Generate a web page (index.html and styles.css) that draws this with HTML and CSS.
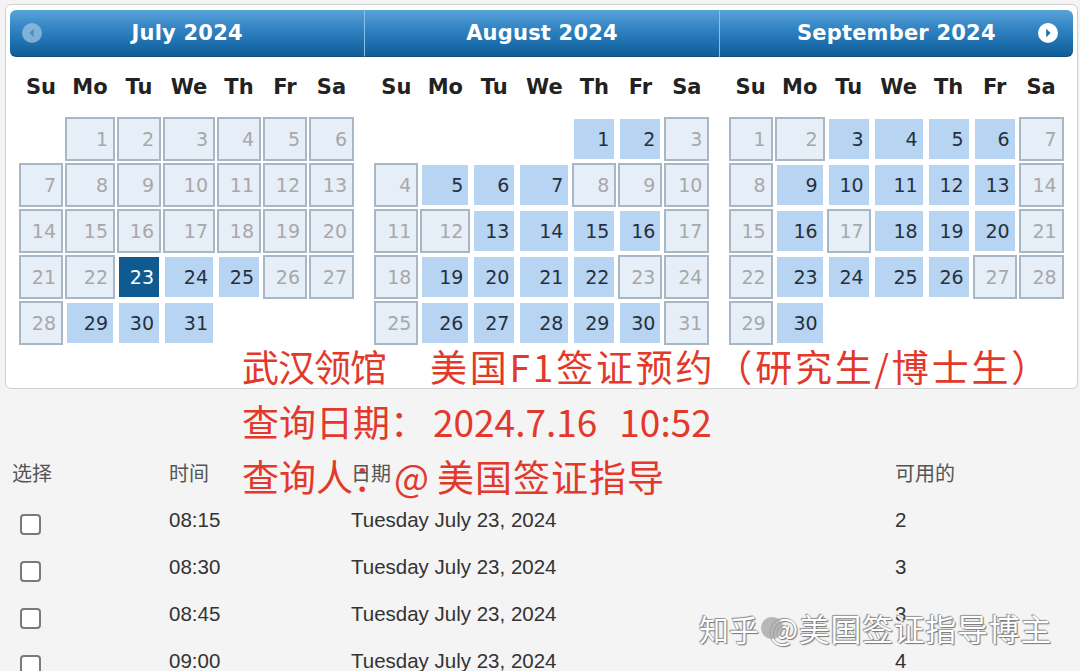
FILE: index.html
```html
<!DOCTYPE html>
<html lang="zh">
<head>
<meta charset="utf-8">
<title>Appointment calendar</title>
<link rel="stylesheet" href="styles.css">
</head>
<body>
<div class="widget">
  <div class="months">
    <div class="group first">
      <div class="head">
        <span class="nav prev"><svg viewBox="0 0 20 20" width="20" height="20"><circle cx="10" cy="10" r="10" fill="#9cc3e2" fill-opacity="0.75"/><path d="M11.8 5.8 L7.4 10 L11.8 14.2 Z" fill="#4f8fc4"/></svg></span>
        <span class="title">July 2024</span>
      </div>
      <table class="cal">
        <colgroup><col class="c1"><col class="c2"><col class="c3"><col class="c4"><col class="c5"><col class="c6"><col class="c7"></colgroup>
        <thead><tr><th>Su</th><th>Mo</th><th>Tu</th><th>We</th><th>Th</th><th>Fr</th><th>Sa</th></tr></thead>
        <tbody>
          <tr><td class="e"></td><td class="u"><span>1</span></td><td class="u"><span>2</span></td><td class="u"><span>3</span></td><td class="u"><span>4</span></td><td class="u"><span>5</span></td><td class="u"><span>6</span></td></tr>
          <tr><td class="u"><span>7</span></td><td class="u"><span>8</span></td><td class="u"><span>9</span></td><td class="u"><span>10</span></td><td class="u"><span>11</span></td><td class="u"><span>12</span></td><td class="u"><span>13</span></td></tr>
          <tr><td class="u"><span>14</span></td><td class="u"><span>15</span></td><td class="u"><span>16</span></td><td class="u"><span>17</span></td><td class="u"><span>18</span></td><td class="u"><span>19</span></td><td class="u"><span>20</span></td></tr>
          <tr><td class="u"><span>21</span></td><td class="u"><span>22</span></td><td class="s"><span>23</span></td><td class="a"><span>24</span></td><td class="a"><span>25</span></td><td class="u"><span>26</span></td><td class="u"><span>27</span></td></tr>
          <tr><td class="u"><span>28</span></td><td class="a"><span>29</span></td><td class="a"><span>30</span></td><td class="a"><span>31</span></td><td class="e"></td><td class="e"></td><td class="e"></td></tr>
        </tbody>
      </table>
    </div>
    <div class="group">
      <div class="head sep">
        <span class="title">August 2024</span>
      </div>
      <table class="cal">
        <colgroup><col class="c1"><col class="c2"><col class="c3"><col class="c4"><col class="c5"><col class="c6"><col class="c7"></colgroup>
        <thead><tr><th>Su</th><th>Mo</th><th>Tu</th><th>We</th><th>Th</th><th>Fr</th><th>Sa</th></tr></thead>
        <tbody>
          <tr><td class="e"></td><td class="e"></td><td class="e"></td><td class="e"></td><td class="a"><span>1</span></td><td class="a"><span>2</span></td><td class="u"><span>3</span></td></tr>
          <tr><td class="u"><span>4</span></td><td class="a"><span>5</span></td><td class="a"><span>6</span></td><td class="a"><span>7</span></td><td class="u"><span>8</span></td><td class="u"><span>9</span></td><td class="u"><span>10</span></td></tr>
          <tr><td class="u"><span>11</span></td><td class="u"><span>12</span></td><td class="a"><span>13</span></td><td class="a"><span>14</span></td><td class="a"><span>15</span></td><td class="a"><span>16</span></td><td class="u"><span>17</span></td></tr>
          <tr><td class="u"><span>18</span></td><td class="a"><span>19</span></td><td class="a"><span>20</span></td><td class="a"><span>21</span></td><td class="a"><span>22</span></td><td class="u"><span>23</span></td><td class="u"><span>24</span></td></tr>
          <tr><td class="u"><span>25</span></td><td class="a"><span>26</span></td><td class="a"><span>27</span></td><td class="a"><span>28</span></td><td class="a"><span>29</span></td><td class="a"><span>30</span></td><td class="u"><span>31</span></td></tr>
        </tbody>
      </table>
    </div>
    <div class="group last">
      <div class="head sep">
        <span class="title">September 2024</span>
        <span class="nav next"><svg viewBox="0 0 20 20" width="20" height="20"><circle cx="10" cy="10" r="10" fill="#ffffff"/><path d="M8.2 5.8 L12.6 10 L8.2 14.2 Z" fill="#1f6ea8"/></svg></span>
      </div>
      <table class="cal">
        <colgroup><col class="c1"><col class="c2"><col class="c3"><col class="c4"><col class="c5"><col class="c6"><col class="c7"></colgroup>
        <thead><tr><th>Su</th><th>Mo</th><th>Tu</th><th>We</th><th>Th</th><th>Fr</th><th>Sa</th></tr></thead>
        <tbody>
          <tr><td class="u"><span>1</span></td><td class="u"><span>2</span></td><td class="a"><span>3</span></td><td class="a"><span>4</span></td><td class="a"><span>5</span></td><td class="a"><span>6</span></td><td class="u"><span>7</span></td></tr>
          <tr><td class="u"><span>8</span></td><td class="a"><span>9</span></td><td class="a"><span>10</span></td><td class="a"><span>11</span></td><td class="a"><span>12</span></td><td class="a"><span>13</span></td><td class="u"><span>14</span></td></tr>
          <tr><td class="u"><span>15</span></td><td class="a"><span>16</span></td><td class="u"><span>17</span></td><td class="a"><span>18</span></td><td class="a"><span>19</span></td><td class="a"><span>20</span></td><td class="u"><span>21</span></td></tr>
          <tr><td class="u"><span>22</span></td><td class="a"><span>23</span></td><td class="a"><span>24</span></td><td class="a"><span>25</span></td><td class="a"><span>26</span></td><td class="u"><span>27</span></td><td class="u"><span>28</span></td></tr>
          <tr><td class="u"><span>29</span></td><td class="a"><span>30</span></td><td class="e"></td><td class="e"></td><td class="e"></td><td class="e"></td><td class="e"></td></tr>
        </tbody>
      </table>
    </div>
  </div>
</div>

<div class="slots">
  <div class="row hdr"><span class="col1">选择</span><span>时间</span><span class="date-h">日期</span><span>可用的</span></div>
  <div class="row"><span class="col1"><i class="box"></i></span><span>08:15</span><span>Tuesday July 23, 2024</span><span>2</span></div>
  <div class="row"><span class="col1"><i class="box"></i></span><span>08:30</span><span>Tuesday July 23, 2024</span><span>3</span></div>
  <div class="row"><span class="col1"><i class="box"></i></span><span>08:45</span><span>Tuesday July 23, 2024</span><span>3</span></div>
  <div class="row"><span class="col1"><i class="box"></i></span><span>09:00</span><span>Tuesday July 23, 2024</span><span>4</span></div>
</div>

<div class="note">
  <div class="line"><span class="g0">武汉领馆</span><span class="g1">美国F1签证预约（研究生/博士生）</span></div>
  <div class="line"><span>查询日期：</span><span class="g2">2024.7.16</span><span class="g3">10:52</span></div>
  <div class="line"><span>查询人：</span><span class="g4">@</span><span class="g5">美国签证指导</span></div>
</div>

<div class="hdr-over">日期</div>

<div class="mark"><span>知乎</span><i class="blob"></i><span class="who">@美国签证指导博主</span></div>
</body>
</html>
```

FILE: styles.css
```css
html, body {
  margin: 0;
  padding: 0;
}
body {
  background: #f4f4f4;
  width: 1080px;
  height: 671px;
  overflow: hidden;
  position: relative;
  font-family: "DejaVu Sans", Verdana, sans-serif;
}

.widget {
  margin: 4px 0 0 5px;
  width: 1063px;
  padding: 5px 4px 42px 4px;
  background: #ffffff;
  border: 1px solid #cfcfcf;
  border-radius: 6px;
}

.months {
  display: flex;
}
.group {
  flex: 1 1 0;
  min-width: 0;
}

.head {
  height: 47px;
  display: flex;
  align-items: center;
  justify-content: center;
  position: relative;
  background: linear-gradient(#5aa3d9 0%, #3687c6 35%, #1c6dac 75%, #135c95 100%);
  border-bottom: 1px solid #0f5080;
  box-sizing: border-box;
}
.first .head {
  border-radius: 6px 0 0 6px;
}
.last .head {
  border-radius: 0 6px 6px 0;
}
.head.sep {
  border-left: 1px solid #8cbfe6;
}
.title {
  color: #ffffff;
  font-weight: bold;
  font-size: 21px;
  letter-spacing: 0.2px;
}
.nav {
  position: absolute;
  top: 13px;
  width: 20px;
  height: 20px;
  line-height: 0;
}
.prev {
  left: 12px;
}
.next {
  right: 15px;
}

.cal {
  table-layout: fixed;
  width: 337px;
  margin-left: 9px;
  border-collapse: separate;
  border-spacing: 0;
}
.first .cal {
  margin-left: 8px;
}
.c1 { width: 46px; }
.c2 { width: 52px; }
.c3 { width: 46px; }
.c4 { width: 54px; }
.c5 { width: 46px; }
.c6 { width: 46px; }
.c7 { width: 47px; }

.cal th {
  height: 59px;
  padding: 0;
  font-weight: bold;
  font-size: 21px;
  color: #222222;
  text-align: center;
}
.cal td {
  height: 46px;
  padding: 1px;
  box-sizing: border-box;
}
.cal td span {
  display: block;
  height: 44px;
  box-sizing: border-box;
  border: 2px solid #ffffff;
  line-height: 40px;
  text-align: right;
  padding-right: 5px;
  font-size: 19px;
}
.cal td.u span {
  background: #e6eef8;
  border-color: #a9b6c3;
  color: #a8a8a8;
}
.cal td.a span {
  background: #b8d4f3;
  color: #26303c;
}
.cal td.s span {
  background: #0f5b91;
  color: #ffffff;
}

.slots {
  margin-top: 60px;
  padding-left: 12px;
  font-family: "Liberation Sans", Arial, sans-serif;
  color: #333333;
  font-size: 20.5px;
}
.row {
  display: grid;
  grid-template-columns: 157px 182px 544px auto;
  height: 47px;
  align-items: center;
}
.row.hdr {
  font-family: "Noto Sans CJK SC", sans-serif;
  font-size: 20px;
  color: #555555;
}
.col1 {
  display: flex;
  align-items: center;
}
.box {
  display: block;
  width: 21px;
  height: 21px;
  box-sizing: border-box;
  margin: 10px 0 0 8px;
  border: 2px solid #7a7a7a;
  border-radius: 4px;
  background: #ffffff;
}
.date-h {
  visibility: hidden;
}

.note {
  position: absolute;
  left: 242px;
  top: 339px;
  font-family: "Noto Sans CJK SC", sans-serif;
  font-size: 37px;
  line-height: 55px;
  color: #e2392b;
  white-space: nowrap;
  text-spacing-trim: space-all;
}
.line {
  display: flex;
}
.g0 {
  letter-spacing: -1px;
}
.g1 {
  margin-left: 44px;
  letter-spacing: 2.8px;
}
.g2 {
  margin-left: 6px;
}
.g3 {
  margin-left: 22px;
}
.g4 {
  margin-left: 4px;
  margin-right: 8px;
}
.g5 {
  letter-spacing: 1px;
}

.hdr-over {
  position: absolute;
  left: 351px;
  top: 458px;
  font-family: "Noto Sans CJK SC", sans-serif;
  font-size: 20px;
  line-height: 30px;
  color: #555555;
}

.mark {
  position: absolute;
  left: 699px;
  top: 608px;
  display: flex;
  align-items: center;
  font-family: "Noto Sans CJK SC", sans-serif;
  font-size: 30px;
  line-height: 40px;
  color: #ffffff;
  text-shadow: 0 0 1px #666, 1px 1px 1px #777, -1px -1px 1px #999;
  white-space: nowrap;
}
.who {
  font-size: 31px;
  letter-spacing: 0.6px;
}
.blob {
  display: block;
  width: 22px;
  height: 22px;
  border-radius: 50%;
  background: #a8a8a8;
  margin: 0 -14px 0 2px;
  opacity: 0.8;
}
```
